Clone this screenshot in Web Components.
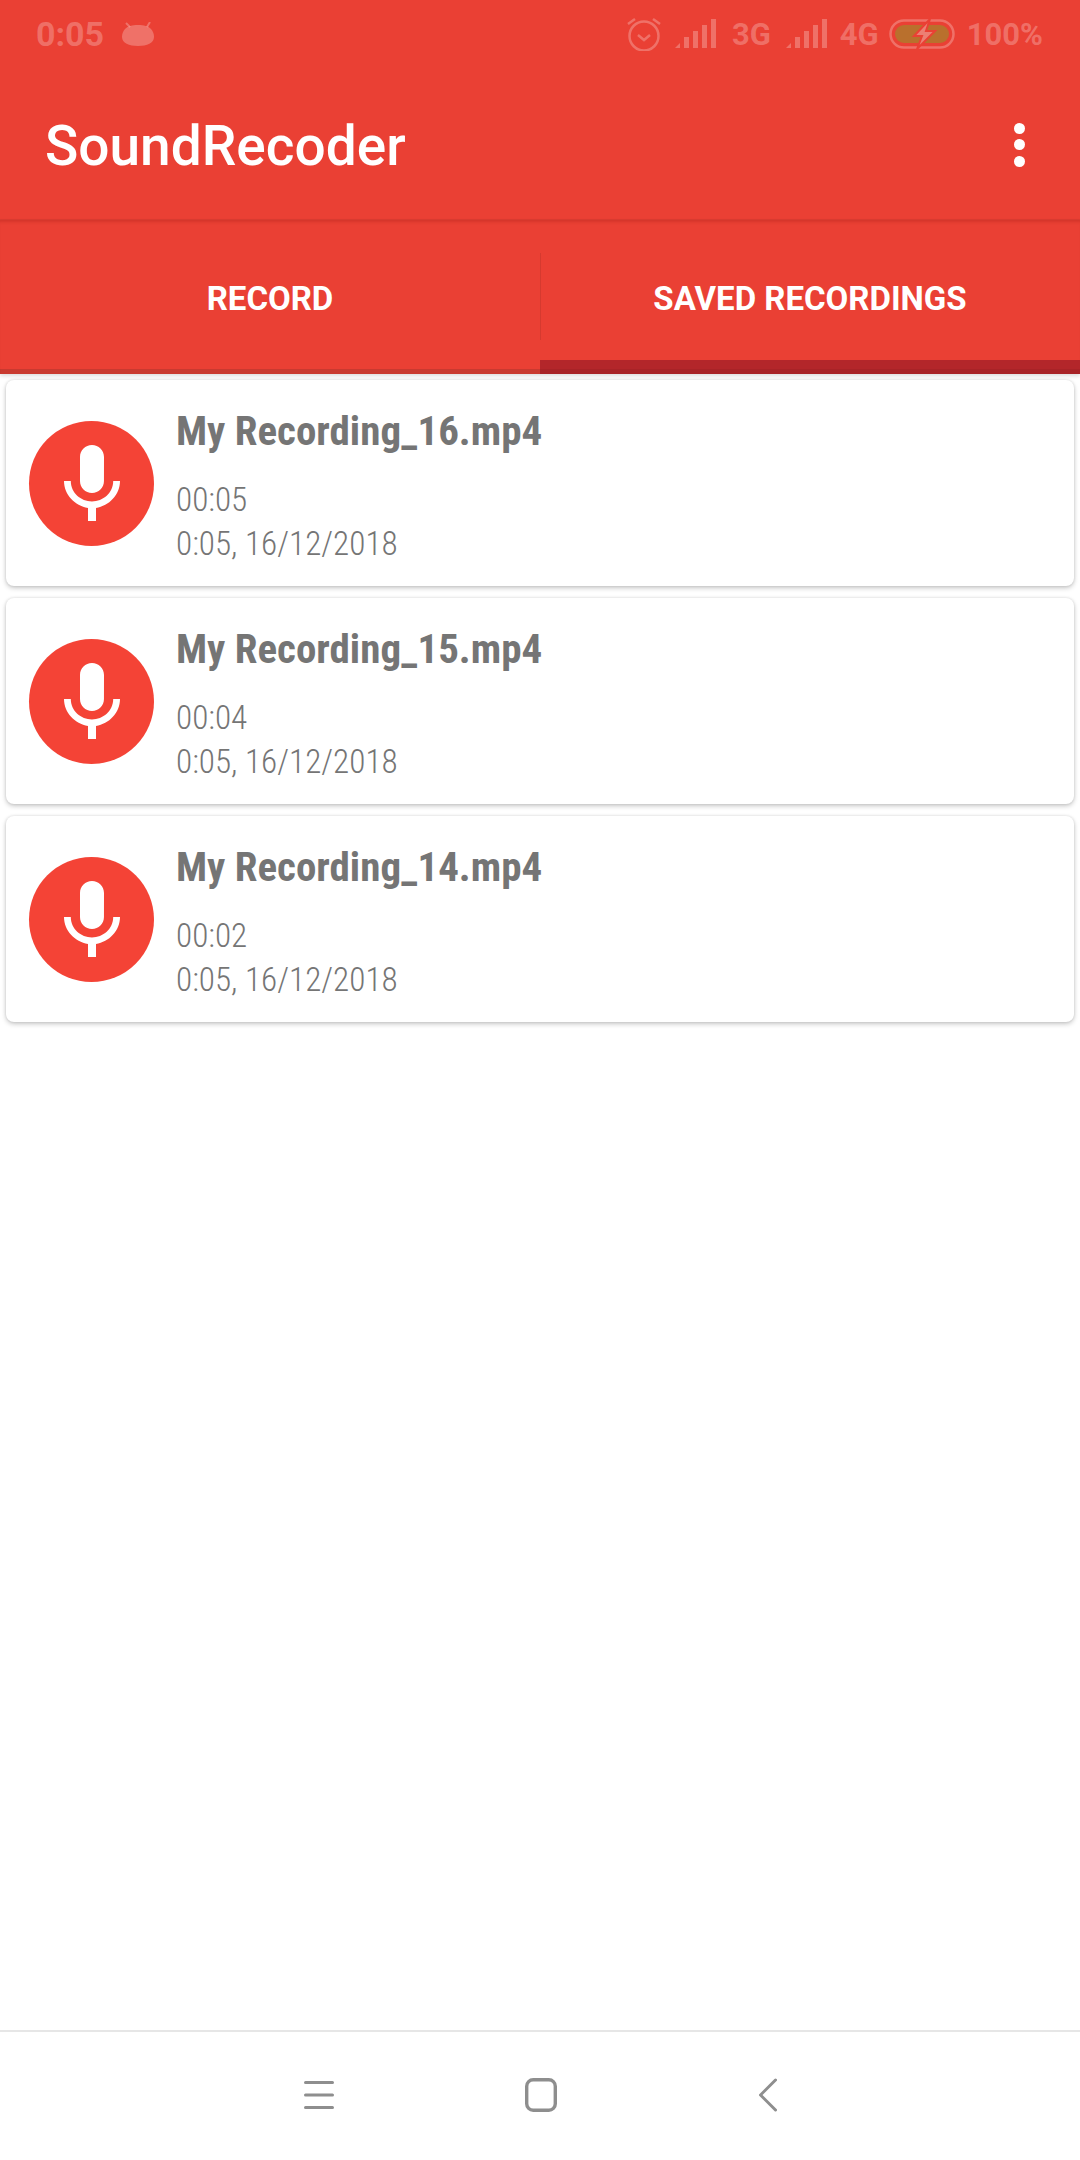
<!DOCTYPE html>
<html>
<head>
<meta charset="utf-8">
<title>SoundRecoder</title>
<style>
  html, body { margin: 0; padding: 0; }
  body {
    width: 1080px;
    height: 2160px;
    display: flex;
    flex-direction: column;
    background: #fff;
    font-family: Roboto, "Liberation Sans", sans-serif;
    overflow: hidden;
  }
</style>
</head>
<body>
  <app-header title="SoundRecoder"></app-header>
  <tab-strip>
    <tab-item>RECORD</tab-item>
    <tab-item active>SAVED RECORDINGS</tab-item>
  </tab-strip>
  <recording-list>
    <recording-card name="My Recording_16.mp4" length="00:05" stamp="0:05, 16/12/2018"></recording-card>
    <recording-card name="My Recording_15.mp4" length="00:04" stamp="0:05, 16/12/2018"></recording-card>
    <recording-card name="My Recording_14.mp4" length="00:02" stamp="0:05, 16/12/2018"></recording-card>
  </recording-list>
  <nav-buttons></nav-buttons>

<script>
const signalBars = `
  <svg width="41" height="30" viewBox="0 0 41 30" fill="currentColor">
    <path d="M0 29 L5 24 V29 Z"/><rect x="9" y="18" width="5" height="11"/>
    <rect x="18" y="12" width="5" height="17"/><rect x="27" y="6" width="5" height="23"/>
    <rect x="36" y="0" width="5" height="29"/>
  </svg>`;

class StatusRow extends HTMLElement {
  connectedCallback() {
    this.attachShadow({ mode: "open" });
    this.shadowRoot.innerHTML = `
      <style>
        :host {
          display: flex;
          align-items: center;
          height: 66px;
          padding: 2px 37px 0 36px;
          box-sizing: border-box;
          color: rgba(255, 255, 255, 0.26);
          font-size: 31px;
          font-weight: 700;
        }
        .spacer { flex: 1; }
        svg { display: block; }
        .time { font-size: 34px; margin-right: 18px; }
        .alarm { margin-right: 14px; }
        .g3 { margin: 0 15px 0 16px; }
        .g4 { margin: 0 10px 0 13px; }
        .pct { margin-left: 12px; }
      </style>
      <span class="time">0:05</span>
      <svg width="32" height="24" viewBox="0 0 32 24" fill="currentColor">
        <path d="M3 7 C1 9 0 12 0 15 C0 21 7 24 16 24 C25 24 32 21 32 15 C32 12 31 9 29 7 C26 4 22 3 16 3 C10 3 6 4 3 7 Z"/>
        <path d="M4 1 L8 5 M28 0 L25 5" stroke="currentColor" stroke-width="2" fill="none"/>
      </svg>
      <span class="spacer"></span>
      <svg class="alarm" width="34" height="34" viewBox="0 0 34 34" fill="none" stroke="currentColor" stroke-width="2.5">
        <circle cx="17" cy="19" r="14.5"/>
        <path d="M11 18 L17 23 L23 18"/>
        <path d="M1 7 L8 2 M33 7 L26 2"/>
      </svg>
      ${signalBars}
      <span class="g3">3G</span>
      ${signalBars}
      <span class="g4">4G</span>
      <svg width="66" height="30" viewBox="0 0 66 30">
        <rect x="1.5" y="1.5" width="63" height="27" rx="13.5" fill="none" stroke="currentColor" stroke-width="2.5"/>
        <rect x="6" y="6" width="54" height="18" rx="9" fill="#b9702d"/>
        <path d="M41 0 L25 17 H33 L28 30 L46 12 H37 Z" fill="#ec7f74" stroke="#ea4034" stroke-width="2"/>
      </svg>
      <span class="pct">100%</span>
    `;
  }
}
customElements.define("status-row", StatusRow);

class AppHeader extends HTMLElement {
  connectedCallback() {
    this.attachShadow({ mode: "open" });
    this.shadowRoot.innerHTML = `
      <style>
        :host {
          display: block;
          height: 220px;
          box-sizing: border-box;
          background: #ea4034;
          border-bottom: 1px solid #dc3c31;
        }
        .bar {
          display: flex;
          align-items: center;
          justify-content: space-between;
          height: 153px;
          box-sizing: border-box;
          padding: 4px 55px 0 45px;
        }
        h1 {
          margin: 4px 0 0;
          color: #fff;
          font-size: 55px;
          font-weight: 500;
          line-height: 1;
        }
        .dots { display: flex; flex-direction: column; gap: 5.5px; }
        .dots i { display: block; width: 11px; height: 11px; border-radius: 50%; background: #fff; }
      </style>
      <status-row></status-row>
      <div class="bar">
        <h1>${this.getAttribute("title")}</h1>
        <div class="dots"><i></i><i></i><i></i></div>
      </div>
    `;
  }
}
customElements.define("app-header", AppHeader);

class TabStrip extends HTMLElement {
  connectedCallback() {
    this.attachShadow({ mode: "open" });
    this.shadowRoot.innerHTML = `
      <style>
        :host {
          display: flex;
          height: 154px;
          background: #ea4034;
          box-shadow: inset 0 4px 3px -2px rgba(160, 30, 20, 0.3), inset 0 -5px 0 #c93a30, 0 2px 4px rgba(0, 0, 0, 0.14);
          position: relative;
          z-index: 1;
        }
      </style>
      <slot></slot>
    `;
  }
}
customElements.define("tab-strip", TabStrip);

class TabItem extends HTMLElement {
  connectedCallback() {
    this.attachShadow({ mode: "open" });
    this.shadowRoot.innerHTML = `
      <style>
        :host {
          flex: 1;
          display: flex;
          align-items: center;
          justify-content: center;
          position: relative;
          padding-top: 2px;
          color: #fff;
          font-size: 33px;
          font-weight: 700;
        }
        :host([active])::before {
          content: "";
          position: absolute;
          left: 0; top: 33px;
          width: 1px; height: 87px;
          background: #d53a2f;
        }
        :host([active])::after {
          content: "";
          position: absolute;
          left: 0; right: 0; bottom: 0;
          height: 14px;
          background: linear-gradient(#b3262a 0 9px, #a82327 9px);
        }
      </style>
      <slot></slot>
    `;
  }
}
customElements.define("tab-item", TabItem);

class RecordingList extends HTMLElement {
  connectedCallback() {
    this.attachShadow({ mode: "open" });
    this.shadowRoot.innerHTML = `
      <style>
        :host {
          flex: 1;
          display: flex;
          flex-direction: column;
          gap: 12px;
          padding: 6px 6px 0;
        }
      </style>
      <slot></slot>
    `;
  }
}
customElements.define("recording-list", RecordingList);

class RecordingCard extends HTMLElement {
  connectedCallback() {
    this.attachShadow({ mode: "open" });
    this.shadowRoot.innerHTML = `
      <style>
        :host {
          display: flex;
          align-items: center;
          height: 206px;
          padding-left: 23px;
          box-sizing: border-box;
          background: #fff;
          border-radius: 8px;
          box-shadow: 0 2px 5px rgba(0, 0, 0, 0.22), 0 0 3px rgba(0, 0, 0, 0.1);
          color: #757575;
        }
        .avatar {
          width: 125px;
          height: 125px;
          flex: none;
          border-radius: 50%;
          background: #f44336;
          display: flex;
          align-items: center;
          justify-content: center;
          margin-right: 22px;
        }
        .text { align-self: flex-start; font-stretch: 75%; font-family: "Roboto Condensed", "Liberation Sans Narrow", Roboto, sans-serif; }
        .name { font-size: 41px; font-weight: 700; line-height: 46px; margin-top: 28px; }
        .line { font-size: 33.2px; font-weight: 350; line-height: 44px; }
        .name + .line { margin-top: 24px; }
      </style>
      <div class="avatar">
        <svg width="96" height="96" viewBox="0 -0.5 24 24" fill="#fff">
          <path d="M12 14c1.66 0 2.99-1.34 2.99-3L15 5c0-1.66-1.34-3-3-3S9 3.34 9 5v6c0 1.66 1.34 3 3 3zm5.3-3c0 3-2.54 5.1-5.3 5.1S6.7 14 6.7 11H5c0 3.41 2.72 6.23 6 6.72V21h2v-3.28c3.28-.48 6-3.3 6-6.72h-1.7z"/>
        </svg>
      </div>
      <div class="text">
        <div class="name">${this.getAttribute("name")}</div>
        <div class="line">${this.getAttribute("length")}</div>
        <div class="line">${this.getAttribute("stamp")}</div>
      </div>
    `;
  }
}
customElements.define("recording-card", RecordingCard);

class NavButtons extends HTMLElement {
  connectedCallback() {
    this.attachShadow({ mode: "open" });
    this.shadowRoot.innerHTML = `
      <style>
        :host {
          display: flex;
          align-items: center;
          justify-content: center;
          gap: 191px;
          height: 130px;
          box-sizing: border-box;
          border-top: 2px solid #e6e6e6;
          padding-bottom: 3px;
        }
        svg { display: block; }
        .back { margin-left: 11px; }
      </style>
      <svg width="30" height="34" viewBox="0 0 30 34" fill="none" stroke="#8e8e8e" stroke-width="3" stroke-linecap="round">
        <path d="M1.5 4.5 H28.5 M1.5 17 H28.5 M1.5 29.5 H28.5"/>
      </svg>
      <svg width="32" height="34" viewBox="0 0 32 34" fill="none" stroke="#8e8e8e" stroke-width="3.4">
        <rect x="1.7" y="1.7" width="28.6" height="30.6" rx="6.5"/>
      </svg>
      <svg class="back" width="18" height="34" viewBox="0 0 18 34" fill="none" stroke="#8e8e8e" stroke-width="3" stroke-linecap="round">
        <path d="M16.5 2 L1.5 17 L16.5 32"/>
      </svg>
    `;
  }
}
customElements.define("nav-buttons", NavButtons);
</script>
</body>
</html>
